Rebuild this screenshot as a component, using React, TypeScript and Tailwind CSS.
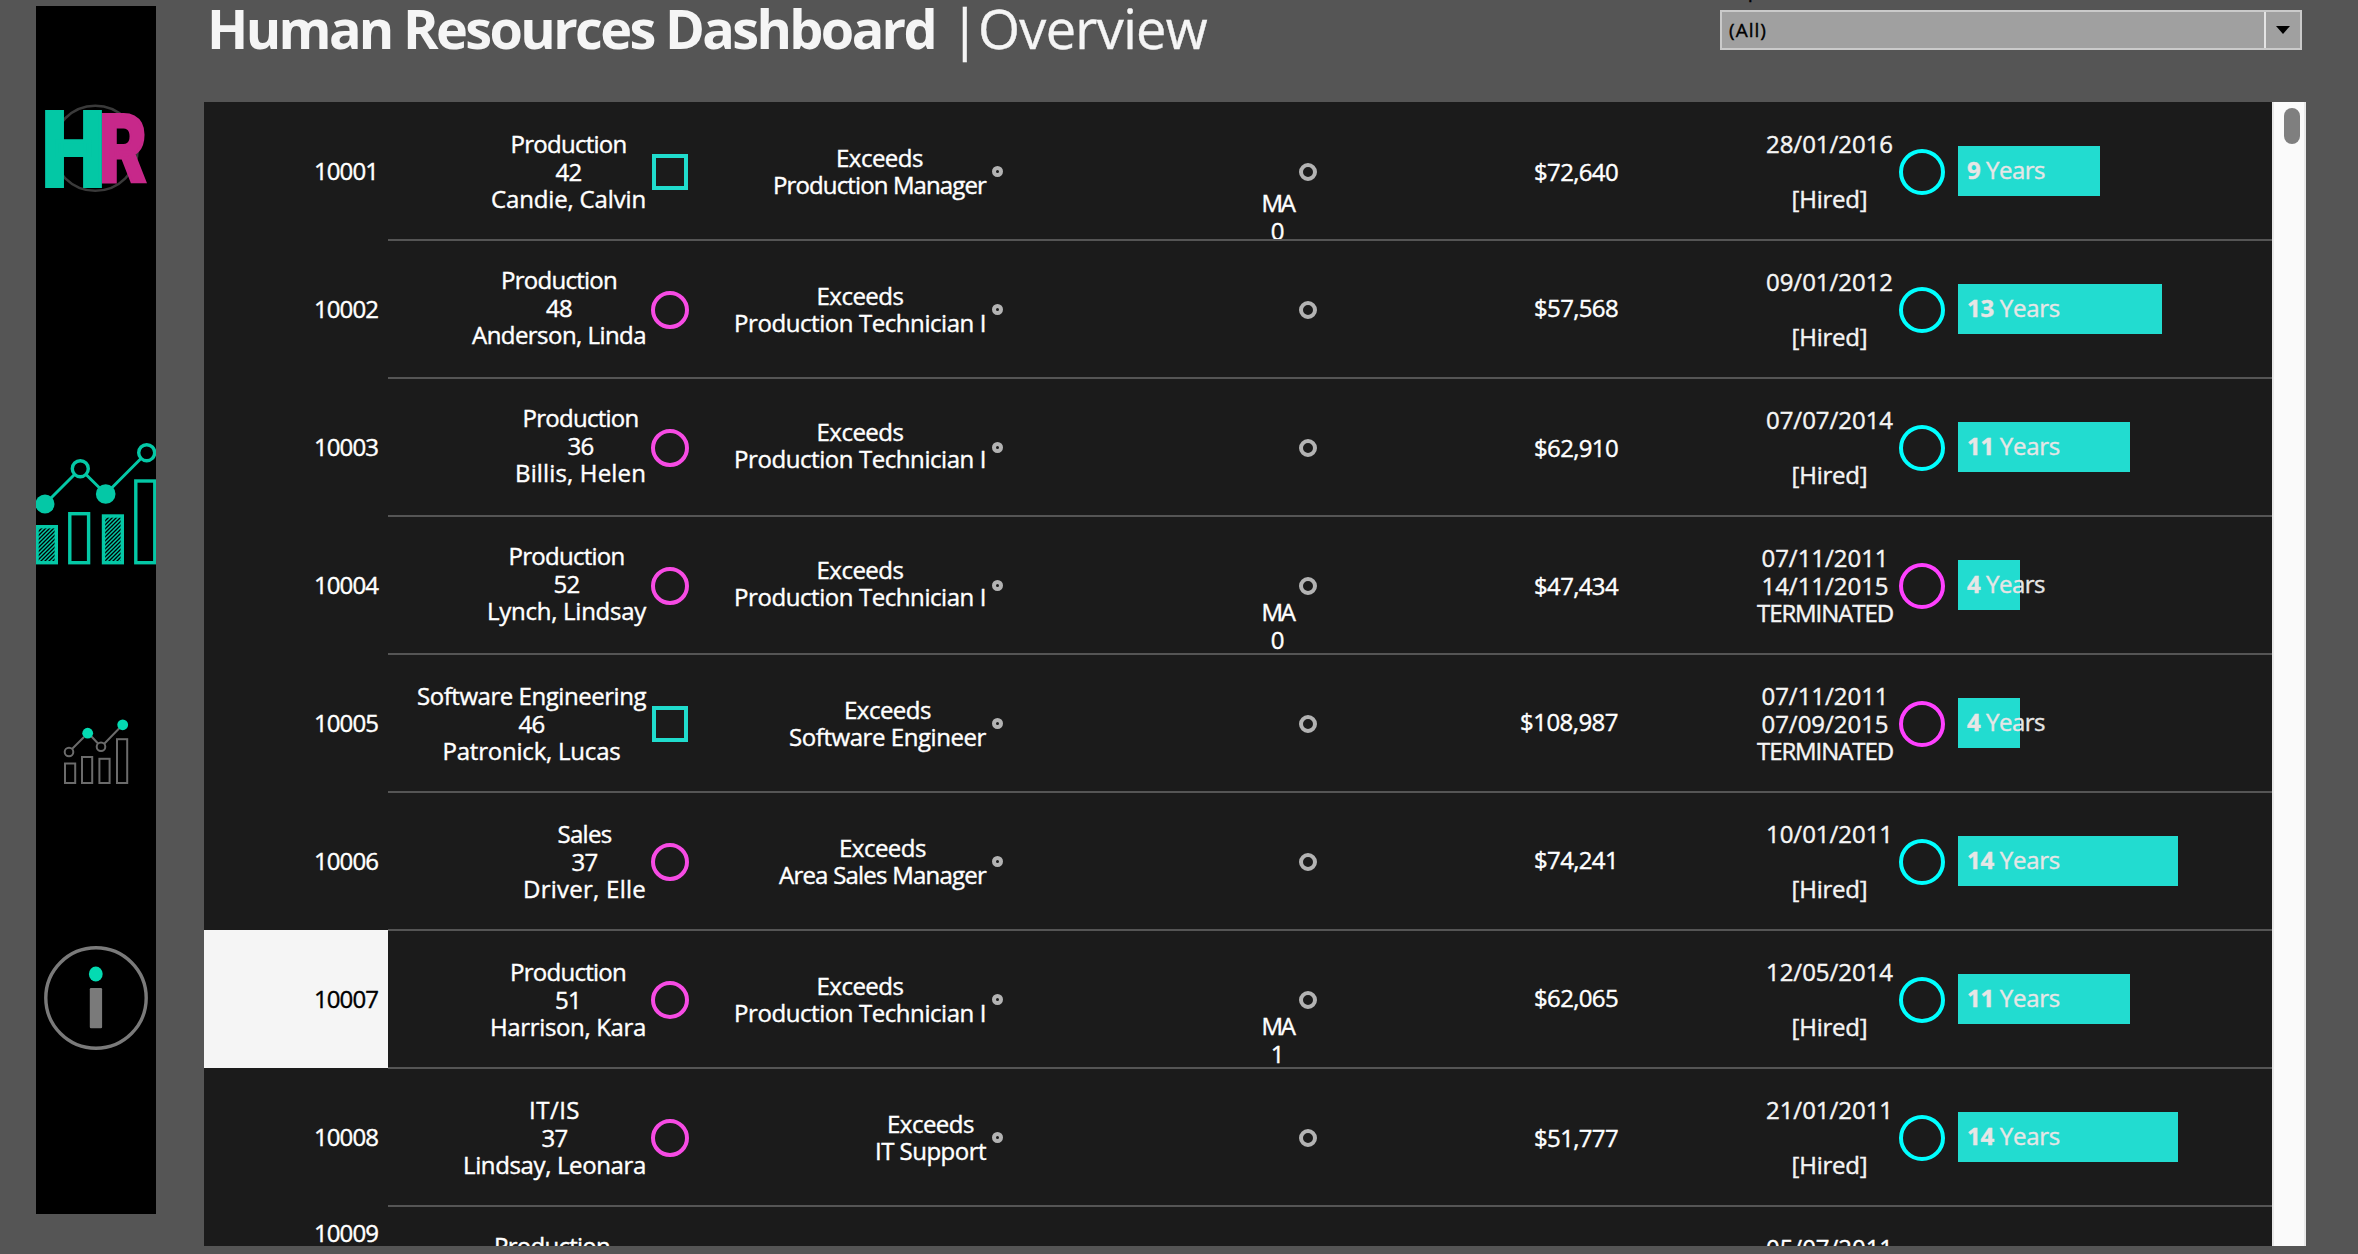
import React, { useLayoutEffect, useRef, useState } from "react";

type Line = [text: string, width: number];

type Row = {
  id: string;
  dept: Line;
  age: string;
  name: Line;
  shape: "square" | "circle";
  job: Line;
  state?: string;
  statePad?: string;
  salary: string;
  dates: [string, string];
  years: number;
  personPad: string;
  jobPad: string;
  salaryPad: string;
};

const high = "pt-[26px]";
const low = "pt-[28px]";
const jobHigh = "pt-[40px]";
const jobLow = "pt-[42px]";
const salHigh = "pt-[54px]";
const salLow = "pt-[56px]";

const production: Line = ["Production", 116];
const technician: Line = ["Production Technician I", 252];

const rows: Row[] = [
  { id: "10001", dept: production, age: "42", name: ["Candie, Calvin", 155], shape: "square", job: ["Production Manager", 213], state: "0", statePad: "pt-[87px]", salary: "$72,640", dates: ["28/01/2016", ""], years: 9, personPad: low, jobPad: jobLow, salaryPad: salLow },
  { id: "10002", dept: production, age: "48", name: ["Anderson, Linda", 174], shape: "circle", job: technician, salary: "$57,568", dates: ["09/01/2012", ""], years: 13, personPad: high, jobPad: jobLow, salaryPad: salHigh },
  { id: "10003", dept: production, age: "36", name: ["Billis, Helen", 131], shape: "circle", job: technician, salary: "$62,910", dates: ["07/07/2014", ""], years: 11, personPad: high, jobPad: jobHigh, salaryPad: salLow },
  { id: "10004", dept: production, age: "52", name: ["Lynch, Lindsay", 159], shape: "circle", job: technician, state: "0", statePad: "pt-[82px]", salary: "$47,434", dates: ["07/11/2011", "14/11/2015"], years: 4, personPad: high, jobPad: jobHigh, salaryPad: salLow },
  { id: "10005", dept: ["Software Engineering", 229], age: "46", name: ["Patronick, Lucas", 178], shape: "square", job: ["Software Engineer", 197], salary: "$108,987", dates: ["07/11/2011", "07/09/2015"], years: 4, personPad: low, jobPad: jobLow, salaryPad: salHigh },
  { id: "10006", dept: ["Sales", 54], age: "37", name: ["Driver, Elle", 123], shape: "circle", job: ["Area Sales Manager", 207], salary: "$74,241", dates: ["10/01/2011", ""], years: 14, personPad: low, jobPad: jobLow, salaryPad: salHigh },
  { id: "10007", dept: production, age: "51", name: ["Harrison, Kara", 156], shape: "circle", job: technician, state: "1", statePad: "pt-[82px]", salary: "$62,065", dates: ["12/05/2014", ""], years: 11, personPad: low, jobPad: jobLow, salaryPad: salHigh },
  { id: "10008", dept: ["IT/IS", 51], age: "37", name: ["Lindsay, Leonara", 183], shape: "circle", job: ["IT Support", 111], salary: "$51,777", dates: ["21/01/2011", ""], years: 14, personPad: low, jobPad: jobLow, salaryPad: salLow },
];

const barWidths: Record<number, string> = {
  4: "w-[62px]",
  9: "w-[142px]",
  11: "w-[172px]",
  13: "w-[204px]",
  14: "w-[220px]",
};

/* Tracks one line of text so that it fills the given measure. */
function Fit({ width, children }: { width: number; children: React.ReactNode }) {
  const ref = useRef<HTMLSpanElement>(null);
  const [spacing, setSpacing] = useState(0);
  useLayoutEffect(() => {
    const el = ref.current;
    if (!el) return;
    const count = (el.textContent ?? "").length;
    if (count > 0) setSpacing((width - el.getBoundingClientRect().width) / count);
  }, [width]);
  return (
    <span ref={ref} className="inline-block whitespace-pre" style={{ letterSpacing: `${spacing}px` }}>
      {children}
    </span>
  );
}

function Logo() {
  return (
    <svg className="mt-[94px] block h-[100px] w-[120px] shrink-0" viewBox="0 0 120 100">
      <circle cx="59.3" cy="48.3" r="42.5" fill="none" stroke="#3a3a3a" strokeWidth="2.5" />
      <text x="63" y="82.2" fill="#c7288a" stroke="#c7288a" strokeWidth="3" fontFamily="Roboto" fontWeight="900" fontSize="94" textLength="48" lengthAdjust="spacingAndGlyphs">R</text>
      <text x="6" y="86" fill="#03c8a5" stroke="#03c8a5" strokeWidth="4" fontFamily="Roboto" fontWeight="900" fontSize="104" textLength="63" lengthAdjust="spacingAndGlyphs">H</text>
    </svg>
  );
}

function ChartIcon() {
  return (
    <svg className="mt-[220px] block h-[160px] w-[120px] shrink-0" viewBox="0 0 120 160" fill="none" stroke="#04c8a6" strokeWidth="3.4">
      <defs>
        <pattern id="hatch" width="4" height="4" patternUnits="userSpaceOnUse">
          <path d="M-1 5L5 -1M-1 1L1 -1M3 5L5 3" stroke="#04c8a6" strokeWidth="1.5" />
        </pattern>
      </defs>
      <path d="M9 84L38.5 54.5M50 54.5L69.7 74L105 38.5" strokeWidth="3" />
      <circle cx="9" cy="84" r="9.5" fill="#04c8a6" stroke="none" />
      <circle cx="44.3" cy="48.7" r="8" />
      <circle cx="69.7" cy="74" r="9.8" fill="#04c8a6" stroke="none" />
      <circle cx="110.7" cy="32.7" r="8" />
      <rect x="1" y="106.7" width="19.3" height="36" fill="url(#hatch)" />
      <rect x="33.8" y="93.7" width="18.8" height="49" />
      <rect x="67.5" y="96" width="18.8" height="46.7" fill="url(#hatch)" />
      <rect x="99.8" y="61" width="19" height="81.7" />
    </svg>
  );
}

function SmallChartIcon() {
  return (
    <svg className="mt-[120px] block h-[100px] w-[120px] shrink-0" viewBox="0 0 120 100" fill="none" stroke="#6b6b6b" strokeWidth="2">
      <path d="M36 49L48 37M55 36L62 43.5M68.5 43.5L84 27.5" />
      <circle cx="33" cy="52" r="4.3" />
      <circle cx="65" cy="46.7" r="4.3" />
      <circle cx="51.7" cy="33.2" r="5.4" fill="#04dbb2" stroke="none" />
      <circle cx="86.7" cy="24.8" r="5.4" fill="#04dbb2" stroke="none" />
      <rect x="29" y="63.5" width="10.2" height="19.5" />
      <rect x="46" y="57" width="10.2" height="26" />
      <rect x="63.4" y="58.8" width="10.2" height="24.2" />
      <rect x="81" y="39.2" width="10.2" height="43.8" />
    </svg>
  );
}

function InfoIcon() {
  return (
    <svg className="mt-[120px] block h-[160px] w-[120px] shrink-0" viewBox="0 0 120 160">
      <circle cx="60" cy="78" r="50.2" fill="none" stroke="#7a7a7a" strokeWidth="3.4" />
      <ellipse cx="59.8" cy="54" rx="6.9" ry="7.5" fill="#04dbb2" />
      <rect x="53.8" y="68" width="12.3" height="40.3" rx="1.2" fill="#7a7a7a" />
    </svg>
  );
}

function EmployeeRow({ row }: { row: Row }) {
  const terminated = row.dates[1] !== "";
  return (
    <div className="flex h-[138px] shrink-0 whitespace-nowrap text-center">
      <div className={"flex w-[258px] justify-end " + row.personPad}>
        <div>
          <div className="h-[27.5px]"><Fit width={row.dept[1]}>{row.dept[0]}</Fit></div>
          <div className="h-[27.5px]"><Fit width={26}>{row.age}</Fit></div>
          <div className="h-[27.5px]"><Fit width={row.name[1]}>{row.name[0]}</Fit></div>
        </div>
      </div>
      <div className="flex w-[48px] items-center justify-center pb-px">
        {row.shape === "square" ? (
          <div className="mt-[3px] size-[36px] border-4 border-[#20dccd]" />
        ) : (
          <div className="mt-[3px] size-[38px] rounded-full border-4 border-[#f74be4]" />
        )}
      </div>
      <div className={"flex w-[292px] justify-end " + row.jobPad}>
        <div>
          <div className="h-[27px]"><Fit width={87}>Exceeds</Fit></div>
          <div className="h-[27px]"><Fit width={row.job[1]}>{row.job[0]}</Fit></div>
        </div>
      </div>
      <div className="flex w-[23px] items-center justify-center">
        <div className="size-[11px] rounded-full border-4 border-[#b3b3b3]" />
      </div>
      <div className={"ml-[247px] w-[43px] " + (row.statePad ?? "")}>
        {row.state && (
          <>
            <div className="h-[27.5px]"><Fit width={32}>MA</Fit></div>
            <div className="h-[27.5px]">{row.state}</div>
          </>
        )}
      </div>
      <div className="flex w-[18px] items-center pt-[2px]">
        <div className="size-[18px] rounded-full border-4 border-[#b3b3b3]" />
      </div>
      <div className={"w-[301px] text-right " + row.salaryPad}>
        <Fit width={row.salary.length > 7 ? 98 : 84}>{row.salary}</Fit>
      </div>
      <div className="flex w-[275px] justify-end pt-[28px] text-[#f5f5f5]">
        <div>
          <div className="h-[27.5px]"><Fit width={127}>{row.dates[0]}</Fit></div>
          <div className="h-[27.5px]">{terminated && <Fit width={127}>{row.dates[1]}</Fit>}</div>
          <div className="h-[27.5px]">
            {terminated ? <Fit width={136}>TERMINATED</Fit> : <Fit width={76}>[Hired]</Fit>}
          </div>
        </div>
      </div>
      <div className="ml-px flex w-[55px] items-center justify-center pt-[2px]">
        <div className={"size-[46px] rounded-full border-4 " + (terminated ? "border-[#ff40ff]" : "border-[#00ffff]")} />
      </div>
      <div className={"mt-[44px] ml-[9px] h-[50px] bg-[#22dcd0] pt-[10px] pl-[9px] text-left text-[#e6e6e6] " + barWidths[row.years]}>
        <Fit width={row.years > 9 ? 93 : 78}><b>{row.years}</b> Years</Fit>
      </div>
    </div>
  );
}

export default function App() {
  return (
    <div className="flex h-[1254px] w-[2358px] overflow-hidden bg-[#555555] font-['Open_Sans',sans-serif] text-[24px] leading-[27.5px] font-medium text-white [-webkit-text-stroke:0.4px]">
      <nav className="mt-[6px] ml-[36px] flex h-[1208px] w-[120px] shrink-0 flex-col bg-black">
        <Logo />
        <ChartIcon />
        <SmallChartIcon />
        <InfoIcon />
      </nav>
      <main className="ml-[48px] flex w-[2102px] shrink-0 flex-col">
        <header className="flex h-[102px] justify-between">
          <h1 className="-mt-[9px] ml-[3px] flex text-[54px] leading-[74px] whitespace-nowrap text-[#f5f5f5]">
            <b className="w-[743px] [-webkit-text-stroke:0px]"><Fit width={728}>Human Resources Dashboard</Fit></b>
            <span className="w-[28px] pr-[2px] text-center font-normal">|</span>
            <Fit width={229}>Overview</Fit>
          </h1>
          <div className="mr-[4px] flex w-[582px] flex-col">
            <div className="-mt-[24px] mb-[6px] pl-[2px] text-[20px] leading-[28px] text-black">Department</div>
            <div className="flex h-[40px] border-2 border-[#cacaca] bg-[#a0a0a0] text-black">
              <div className="flex-1 pl-[7px] text-[19px] leading-[36px]"><Fit width={38}>(All)</Fit></div>
              <div className="flex w-[36px] items-center justify-center border-l-2 border-[#e4e4e4]">
                <svg className="h-[8px] w-[14px]" viewBox="0 0 14 8"><path d="M0 0H14L7 8Z" fill="#000" /></svg>
              </div>
            </div>
          </div>
        </header>
        <section className="flex h-[1144px] overflow-hidden bg-[#1b1b1b]">
          <div className="flex w-[184px] shrink-0 flex-col text-right">
            {rows.map((r) => (
              <div key={r.id} className={"h-[138px] shrink-0 pt-[55px] pr-[10px] " + (r.id === "10007" ? "bg-[#f5f5f5] text-black" : "")}>
                <Fit width={64}>{r.id}</Fit>
              </div>
            ))}
            <div className="h-[40px] pt-[13px] pr-[10px]"><Fit width={64}>10009</Fit></div>
          </div>
          <div className="flex w-[1884px] shrink-0 flex-col">
            {rows.map((r) => (
              <React.Fragment key={r.id}>
                <EmployeeRow row={r} />
                <div className="-my-px h-[2px] shrink-0 bg-[#555555]" />
              </React.Fragment>
            ))}
            <div className="flex h-[138px] shrink-0 text-center">
              <div className="ml-[70px] w-[188px] pt-[26px]"><Fit width={116}>Production</Fit></div>
              <div className="ml-[971px] w-[276px] pt-[28px] text-right"><Fit width={127}>05/07/2011</Fit></div>
            </div>
          </div>
          <div className="w-[34px] shrink-0 border-x-2 border-[#e8e8e8] bg-[#fafafa] pt-[6px] pl-[10px]">
            <div className="h-[36px] w-[16px] rounded-full bg-[#7f7f7f]" />
          </div>
        </section>
      </main>
    </div>
  );
}
